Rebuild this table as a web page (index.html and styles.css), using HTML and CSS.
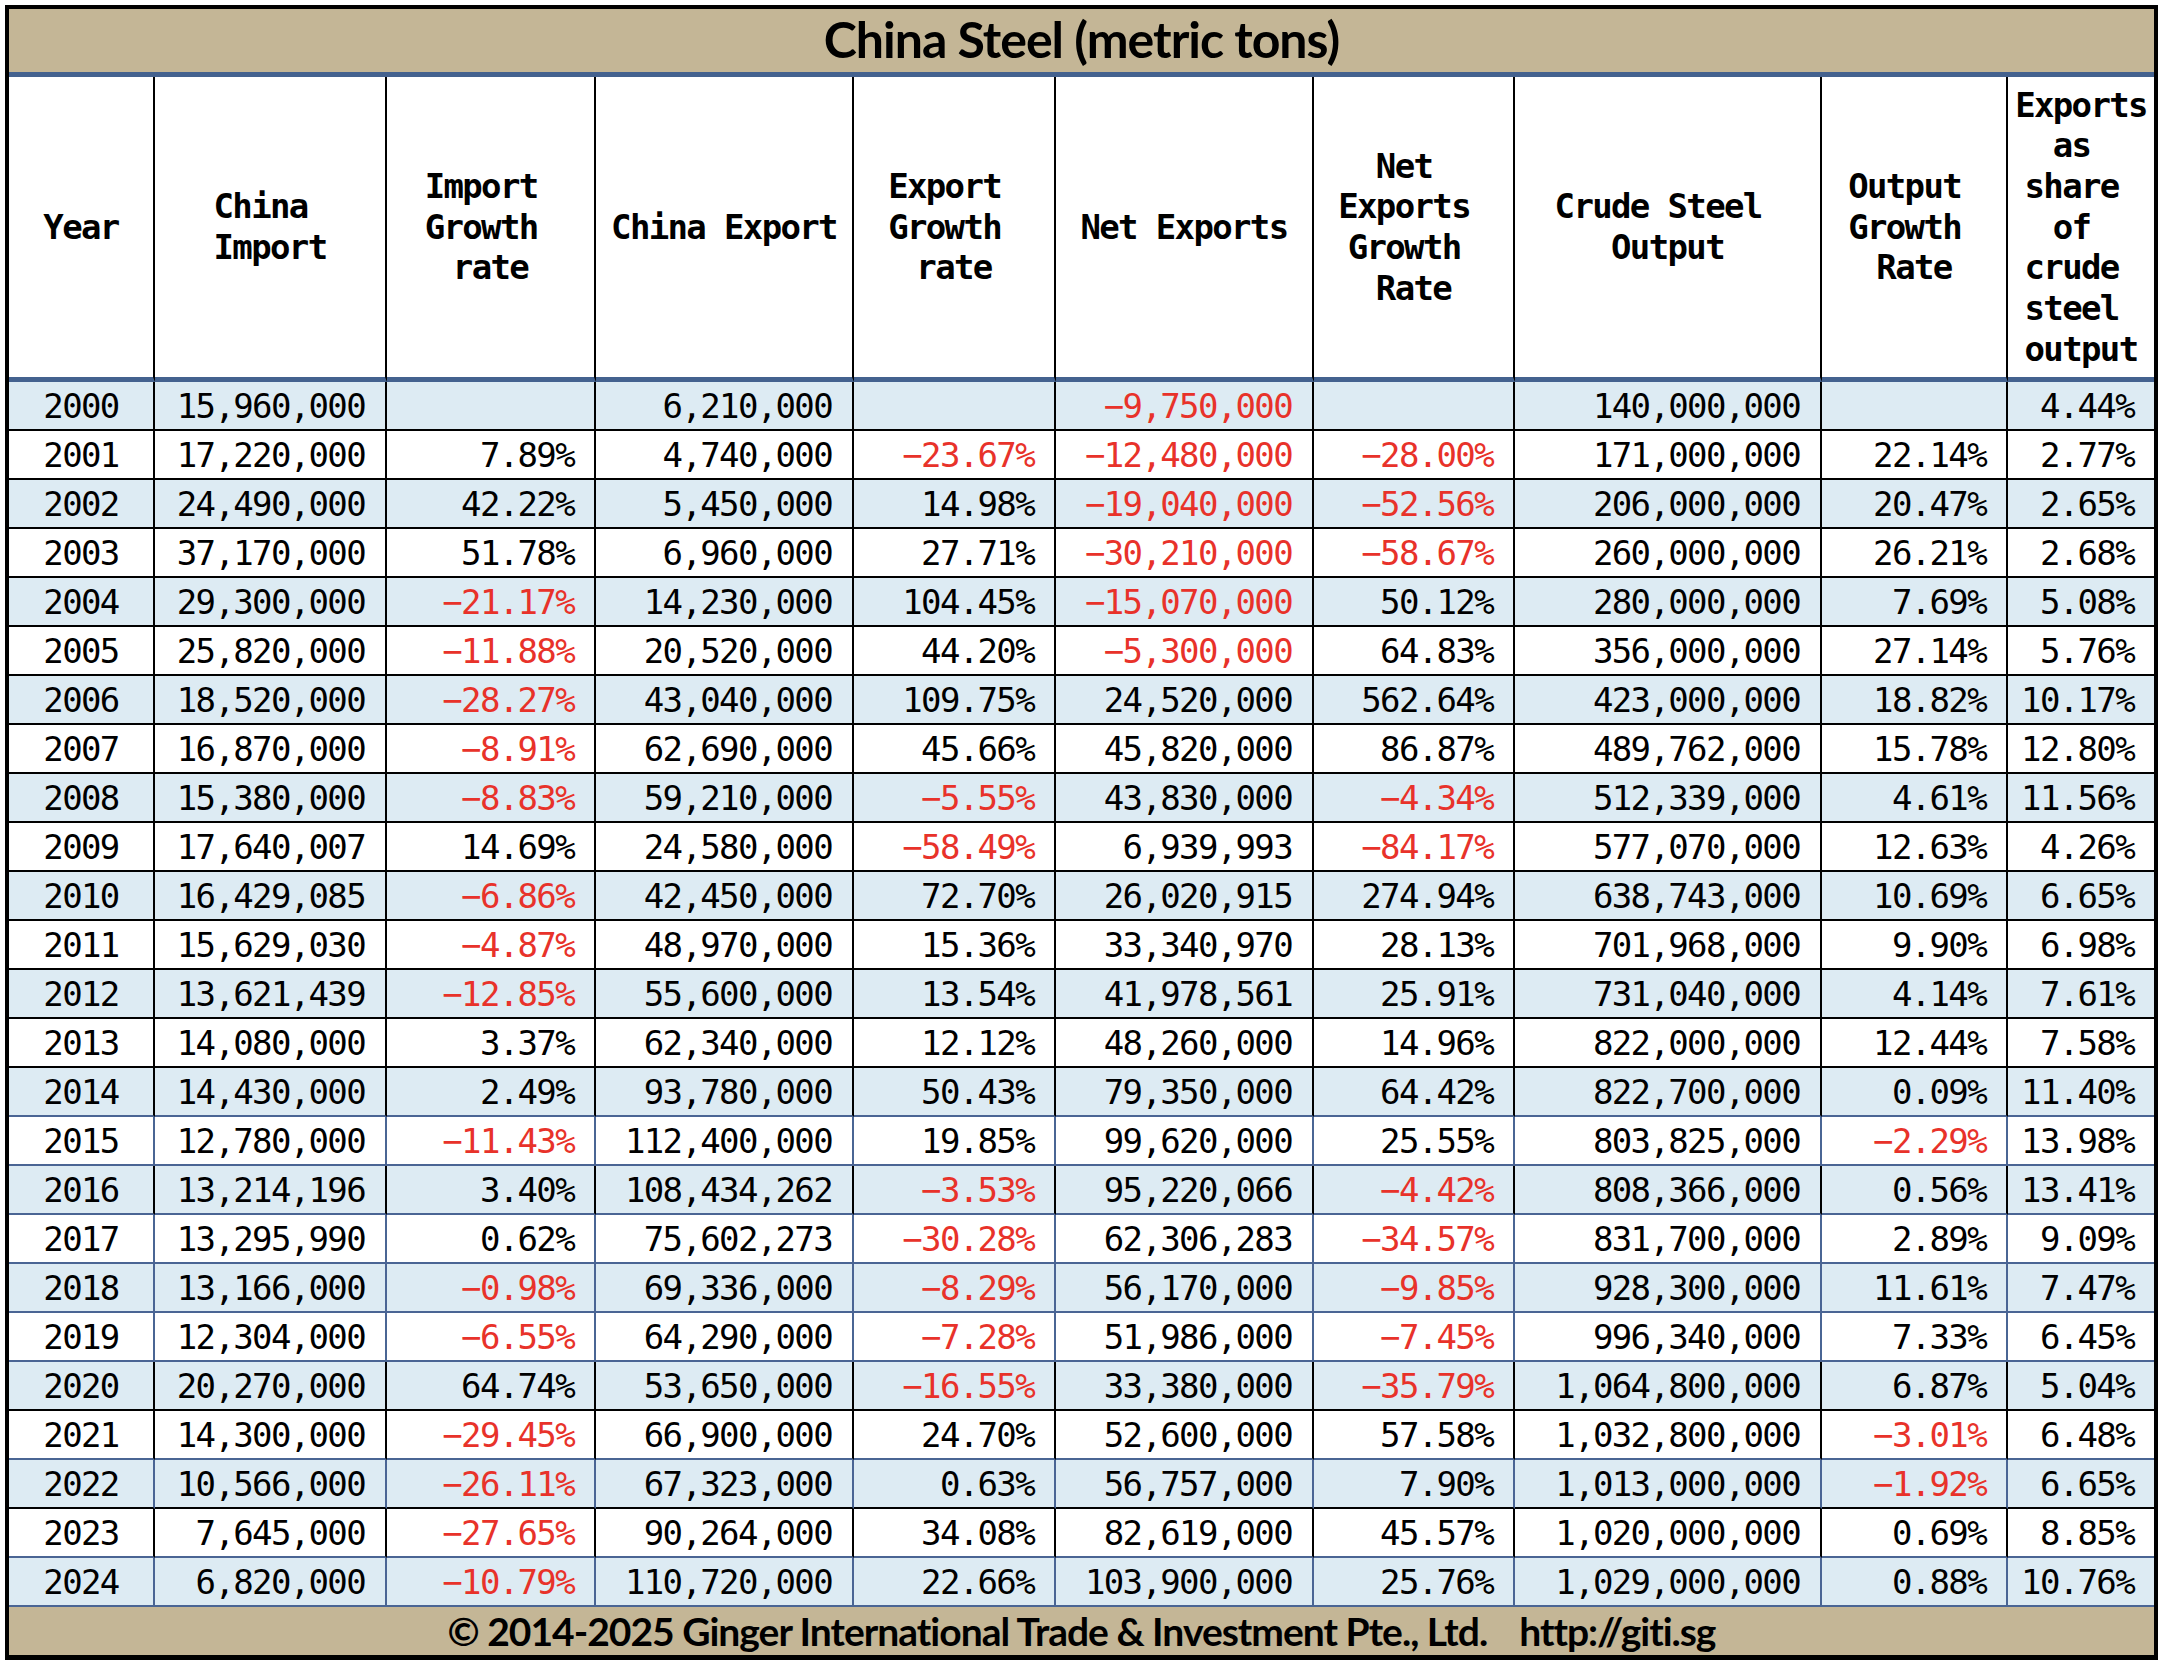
FILE: index.html
```html
<!DOCTYPE html>
<html lang="en">
<head>
<meta charset="utf-8">
<title>China Steel (metric tons)</title>
<link rel="stylesheet" href="styles.css">
</head>
<body>
<div class="sheet">
  <div class="title">China Steel (metric tons)</div>
  <div class="grid">
    <div class="row head">
      <div class="h">Year</div>
      <div class="h">China&nbsp;<br>Import</div>
      <div class="h">Import&nbsp;<br>Growth&nbsp;<br>rate</div>
      <div class="h">China Export</div>
      <div class="h">Export&nbsp;<br>Growth&nbsp;<br>rate</div>
      <div class="h">Net Exports</div>
      <div class="h">Net&nbsp;<br>Exports&nbsp;<br>Growth&nbsp;<br>Rate</div>
      <div class="h">Crude Steel&nbsp;<br>Output</div>
      <div class="h">Output&nbsp;<br>Growth&nbsp;<br>Rate</div>
      <div class="h">Exports<br>as&nbsp;<br>share&nbsp;<br>of&nbsp;<br>crude&nbsp;<br>steel&nbsp;<br>output</div>
    </div>
    <div class="row alt"><div class="c y">2000</div><div class="c">15,960,000</div><div class="c"></div><div class="c">6,210,000</div><div class="c"></div><div class="c n">−9,750,000</div><div class="c"></div><div class="c">140,000,000</div><div class="c"></div><div class="c">4.44%</div></div>
    <div class="row"><div class="c y">2001</div><div class="c">17,220,000</div><div class="c">7.89%</div><div class="c">4,740,000</div><div class="c n">−23.67%</div><div class="c n">−12,480,000</div><div class="c n">−28.00%</div><div class="c">171,000,000</div><div class="c">22.14%</div><div class="c">2.77%</div></div>
    <div class="row alt"><div class="c y">2002</div><div class="c">24,490,000</div><div class="c">42.22%</div><div class="c">5,450,000</div><div class="c">14.98%</div><div class="c n">−19,040,000</div><div class="c n">−52.56%</div><div class="c">206,000,000</div><div class="c">20.47%</div><div class="c">2.65%</div></div>
    <div class="row"><div class="c y">2003</div><div class="c">37,170,000</div><div class="c">51.78%</div><div class="c">6,960,000</div><div class="c">27.71%</div><div class="c n">−30,210,000</div><div class="c n">−58.67%</div><div class="c">260,000,000</div><div class="c">26.21%</div><div class="c">2.68%</div></div>
    <div class="row alt"><div class="c y">2004</div><div class="c">29,300,000</div><div class="c n">−21.17%</div><div class="c">14,230,000</div><div class="c">104.45%</div><div class="c n">−15,070,000</div><div class="c">50.12%</div><div class="c">280,000,000</div><div class="c">7.69%</div><div class="c">5.08%</div></div>
    <div class="row"><div class="c y">2005</div><div class="c">25,820,000</div><div class="c n">−11.88%</div><div class="c">20,520,000</div><div class="c">44.20%</div><div class="c n">−5,300,000</div><div class="c">64.83%</div><div class="c">356,000,000</div><div class="c">27.14%</div><div class="c">5.76%</div></div>
    <div class="row alt"><div class="c y">2006</div><div class="c">18,520,000</div><div class="c n">−28.27%</div><div class="c">43,040,000</div><div class="c">109.75%</div><div class="c">24,520,000</div><div class="c">562.64%</div><div class="c">423,000,000</div><div class="c">18.82%</div><div class="c">10.17%</div></div>
    <div class="row"><div class="c y">2007</div><div class="c">16,870,000</div><div class="c n">−8.91%</div><div class="c">62,690,000</div><div class="c">45.66%</div><div class="c">45,820,000</div><div class="c">86.87%</div><div class="c">489,762,000</div><div class="c">15.78%</div><div class="c">12.80%</div></div>
    <div class="row alt"><div class="c y">2008</div><div class="c">15,380,000</div><div class="c n">−8.83%</div><div class="c">59,210,000</div><div class="c n">−5.55%</div><div class="c">43,830,000</div><div class="c n">−4.34%</div><div class="c">512,339,000</div><div class="c">4.61%</div><div class="c">11.56%</div></div>
    <div class="row"><div class="c y">2009</div><div class="c">17,640,007</div><div class="c">14.69%</div><div class="c">24,580,000</div><div class="c n">−58.49%</div><div class="c">6,939,993</div><div class="c n">−84.17%</div><div class="c">577,070,000</div><div class="c">12.63%</div><div class="c">4.26%</div></div>
    <div class="row alt"><div class="c y">2010</div><div class="c">16,429,085</div><div class="c n">−6.86%</div><div class="c">42,450,000</div><div class="c">72.70%</div><div class="c">26,020,915</div><div class="c">274.94%</div><div class="c">638,743,000</div><div class="c">10.69%</div><div class="c">6.65%</div></div>
    <div class="row"><div class="c y">2011</div><div class="c">15,629,030</div><div class="c n">−4.87%</div><div class="c">48,970,000</div><div class="c">15.36%</div><div class="c">33,340,970</div><div class="c">28.13%</div><div class="c">701,968,000</div><div class="c">9.90%</div><div class="c">6.98%</div></div>
    <div class="row alt"><div class="c y">2012</div><div class="c">13,621,439</div><div class="c n">−12.85%</div><div class="c">55,600,000</div><div class="c">13.54%</div><div class="c">41,978,561</div><div class="c">25.91%</div><div class="c">731,040,000</div><div class="c">4.14%</div><div class="c">7.61%</div></div>
    <div class="row"><div class="c y">2013</div><div class="c">14,080,000</div><div class="c">3.37%</div><div class="c">62,340,000</div><div class="c">12.12%</div><div class="c">48,260,000</div><div class="c">14.96%</div><div class="c">822,000,000</div><div class="c">12.44%</div><div class="c">7.58%</div></div>
    <div class="row alt bb"><div class="c y">2014</div><div class="c">14,430,000</div><div class="c">2.49%</div><div class="c">93,780,000</div><div class="c">50.43%</div><div class="c">79,350,000</div><div class="c">64.42%</div><div class="c">822,700,000</div><div class="c">0.09%</div><div class="c">11.40%</div></div>
    <div class="row bv bb"><div class="c y">2015</div><div class="c">12,780,000</div><div class="c n">−11.43%</div><div class="c">112,400,000</div><div class="c">19.85%</div><div class="c">99,620,000</div><div class="c">25.55%</div><div class="c">803,825,000</div><div class="c n">−2.29%</div><div class="c">13.98%</div></div>
    <div class="row alt bb"><div class="c y">2016</div><div class="c">13,214,196</div><div class="c">3.40%</div><div class="c">108,434,262</div><div class="c n">−3.53%</div><div class="c">95,220,066</div><div class="c n">−4.42%</div><div class="c">808,366,000</div><div class="c">0.56%</div><div class="c">13.41%</div></div>
    <div class="row bv bb"><div class="c y">2017</div><div class="c">13,295,990</div><div class="c">0.62%</div><div class="c">75,602,273</div><div class="c n">−30.28%</div><div class="c">62,306,283</div><div class="c n">−34.57%</div><div class="c">831,700,000</div><div class="c">2.89%</div><div class="c">9.09%</div></div>
    <div class="row alt bv bb"><div class="c y">2018</div><div class="c">13,166,000</div><div class="c n">−0.98%</div><div class="c">69,336,000</div><div class="c n">−8.29%</div><div class="c">56,170,000</div><div class="c n">−9.85%</div><div class="c">928,300,000</div><div class="c">11.61%</div><div class="c">7.47%</div></div>
    <div class="row bv bb"><div class="c y">2019</div><div class="c">12,304,000</div><div class="c n">−6.55%</div><div class="c">64,290,000</div><div class="c n">−7.28%</div><div class="c">51,986,000</div><div class="c n">−7.45%</div><div class="c">996,340,000</div><div class="c">7.33%</div><div class="c">6.45%</div></div>
    <div class="row alt"><div class="c y">2020</div><div class="c">20,270,000</div><div class="c">64.74%</div><div class="c">53,650,000</div><div class="c n">−16.55%</div><div class="c">33,380,000</div><div class="c n">−35.79%</div><div class="c">1,064,800,000</div><div class="c">6.87%</div><div class="c">5.04%</div></div>
    <div class="row bb"><div class="c y">2021</div><div class="c">14,300,000</div><div class="c n">−29.45%</div><div class="c">66,900,000</div><div class="c">24.70%</div><div class="c">52,600,000</div><div class="c">57.58%</div><div class="c">1,032,800,000</div><div class="c n">−3.01%</div><div class="c">6.48%</div></div>
    <div class="row alt bv"><div class="c y">2022</div><div class="c">10,566,000</div><div class="c n">−26.11%</div><div class="c">67,323,000</div><div class="c">0.63%</div><div class="c">56,757,000</div><div class="c">7.90%</div><div class="c">1,013,000,000</div><div class="c n">−1.92%</div><div class="c">6.65%</div></div>
    <div class="row bb"><div class="c y">2023</div><div class="c">7,645,000</div><div class="c n">−27.65%</div><div class="c">90,264,000</div><div class="c">34.08%</div><div class="c">82,619,000</div><div class="c">45.57%</div><div class="c">1,020,000,000</div><div class="c">0.69%</div><div class="c">8.85%</div></div>
    <div class="row alt bv bb"><div class="c y">2024</div><div class="c">6,820,000</div><div class="c n">−10.79%</div><div class="c">110,720,000</div><div class="c">22.66%</div><div class="c">103,900,000</div><div class="c">25.76%</div><div class="c">1,029,000,000</div><div class="c">0.88%</div><div class="c">10.76%</div></div>
  </div>
  <div class="footer">© 2014-2025 Ginger International Trade &amp; Investment Pte., Ltd.<span class="url">http://giti.sg</span></div>
</div>
</body>
</html>
```
FILE: styles.css
```css
html, body {
  margin: 0;
  padding: 0;
  background: #ffffff;
}

.sheet {
  box-sizing: border-box;
  width: 2153px;
  margin: 5px 0 0 5px;
  border: 4px solid #000000;
  border-bottom-width: 5px;
}

.title {
  box-sizing: border-box;
  height: 68px;
  padding-bottom: 3px;
  background: #c4b696;
  border-bottom: 5px solid #44628f;
  display: flex;
  align-items: center;
  justify-content: center;
  font-family: "Lato", "Liberation Sans", sans-serif;
  font-weight: 700;
  font-size: 50px;
  letter-spacing: -1px;
  color: #000000;
}

.grid {
  display: grid;
  grid-template-columns: 146px 232px 209px 258px 202px 258px 201px 307px 186px 146px;
  font-family: "DejaVu Sans Mono", "Liberation Mono", monospace;
  font-size: 34px;
  letter-spacing: -1.65px;
  color: #000000;
}

.row {
  display: contents;
}

.h {
  box-sizing: border-box;
  height: 305px;
  border-right: 2px solid #000000;
  border-bottom: 5px solid #44628f;
  background: #ffffff;
  display: flex;
  align-items: center;
  justify-content: center;
  text-align: center;
  font-weight: 700;
  line-height: 40.7px;
  white-space: nowrap;
}

.c {
  box-sizing: border-box;
  height: 49px;
  border-right: 2px solid #000000;
  border-bottom: 2px solid #000000;
  background: #ffffff;
  display: flex;
  align-items: center;
  justify-content: flex-end;
  padding-right: 20px;
  white-space: nowrap;
}

.row > :last-child {
  border-right: none;
}

.row.alt > .c {
  background: #ddebf3;
}

.row.bv > .c {
  border-right-color: #4a6594;
}

.row.bb > .c {
  border-bottom-color: #4a6594;
}

.c.y {
  justify-content: center;
  padding-right: 0;
}

.c.n {
  color: #e8322a;
}

.footer {
  box-sizing: border-box;
  height: 48px;
  background: #c4b696;
  display: flex;
  align-items: center;
  justify-content: center;
  font-family: "Lato", "Liberation Sans", sans-serif;
  font-weight: 700;
  font-size: 39px;
  letter-spacing: -1px;
  color: #000000;
}

.footer .url {
  margin-left: 32px;
}
```
